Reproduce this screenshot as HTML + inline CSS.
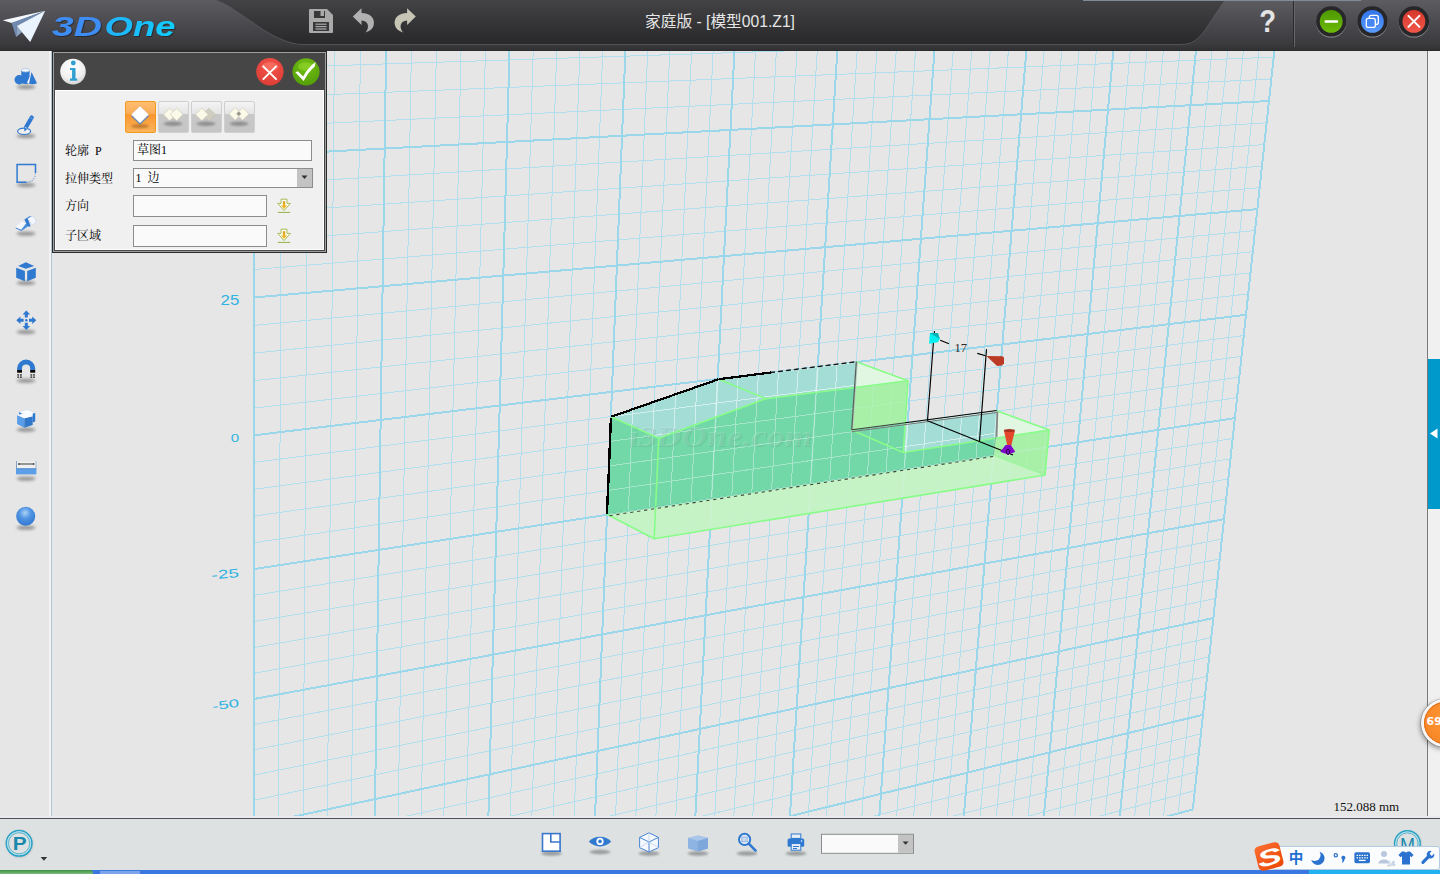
<!DOCTYPE html>
<html lang="zh-CN">
<head>
<meta charset="utf-8">
<title>家庭版 - [模型001.Z1]</title>
<style>
html,body{margin:0;padding:0;}
html{width:1440px;height:874px;overflow:hidden;background:#e6e6e6;}
body{width:1440px;height:874px;position:relative;overflow:hidden;background:#e6e6e6;font-family:"Liberation Sans","Noto Sans CJK SC",sans-serif;}
.abs{position:absolute;}
#tb{left:0;top:0;width:1440px;height:51px;background:linear-gradient(#5d5c61 0%,#4d4c51 40%,#3b3b3e 85%,#303032 100%);}
#title{left:0;width:1440px;top:11px;height:22px;line-height:22px;text-align:center;color:#e6e6e6;font-size:15.7px;white-space:pre;}
#left{left:0;top:51px;width:51px;height:767px;background:linear-gradient(90deg,#e6e6e6 0,#e6e6e6 49px,#efefef 49px,#f4f4f4 50px,#f4f4f4 51px);border-right:1px solid #adc5d3;}
#view{left:52px;top:51px;width:1375px;height:766px;background:#e6e6e6;overflow:hidden;}
#rstrip{left:1427px;top:51px;width:13px;height:767px;background:#f0f0f0;border-left:1px solid #7a7a7a;box-sizing:border-box;}
#rtab{left:1428px;top:359px;width:12px;height:150px;background:#0099cc;}
#bot{left:0;top:818px;width:1440px;height:52px;background:#dde1e1;border-top:1px solid #505050;box-sizing:border-box;}
#task{left:0;top:870px;width:1440px;height:4px;background:#3b77e0;}
#panel{left:52px;top:51px;width:275px;height:202px;background:#2b2b2b;}
#pbody{left:3px;top:39px;width:269px;height:160px;background:#f0f0f0;border:1px solid #fff;box-sizing:border-box;}
.lbl{position:absolute;left:65px;font-family:"Liberation Serif","Noto Serif CJK SC",serif;font-size:12px;line-height:14px;color:#000;white-space:pre;}
.inp{position:absolute;box-sizing:border-box;border:1px solid #8c8c8c;background:#fafafa;font-family:"Liberation Serif","Noto Serif CJK SC",serif;font-size:12px;line-height:18px;color:#000;white-space:pre;padding-left:3px;}
.tbtn{position:absolute;top:101px;width:31px;height:32px;box-sizing:border-box;border:1px solid #cfcfcf;border-radius:2px;background:linear-gradient(#f4f4f4 0%,#e4e4e4 40%,#c8c8c8 41%,#c6c6c6 100%);}
.tbtn.sel{border-color:#f39a1f;background:linear-gradient(#fdbe70 0%,#fbab56 40%,#f8962f 41%,#fcb45c 100%);}
</style>
</head>
<body>
<div id="tb" class="abs">
<svg class="abs" style="left:0;top:0" width="1440" height="51" viewBox="0 0 1440 51">
<defs>
<linearGradient id="gc" x1="0" y1="0" x2="0" y2="1"><stop offset="0" stop-color="#434346"/><stop offset="1" stop-color="#28282a"/></linearGradient>
<linearGradient id="glogo" x1="0" y1="0" x2="1" y2="0"><stop offset="0" stop-color="#3f86f3"/><stop offset="0.5" stop-color="#2aa6fb"/><stop offset="1" stop-color="#12ccff"/></linearGradient>
<linearGradient id="ggreen" x1="0" y1="0" x2="0" y2="1"><stop offset="0" stop-color="#4d9802"/><stop offset="1" stop-color="#6dba08"/></linearGradient>
<linearGradient id="gblue" x1="0" y1="0" x2="0" y2="1"><stop offset="0" stop-color="#3275ea"/><stop offset="1" stop-color="#5a9bff"/></linearGradient>
<linearGradient id="gred" x1="0" y1="0" x2="0" y2="1"><stop offset="0" stop-color="#d6372c"/><stop offset="1" stop-color="#f2574a"/></linearGradient>
<linearGradient id="glogo2" x1="0" y1="0" x2="1" y2="0"><stop offset="0" stop-color="#2f9ef9"/><stop offset="1" stop-color="#10ceff"/></linearGradient>
</defs>
<path d="M215.5 0 Q223 3 229.7 6.9 L265 30.9 Q280 40 292 43 Q297 44.5 304 44.5 L1180 44.5 Q1186 44.5 1190.5 43 Q1198 40 1204.4 30.9 L1225 0 Z" fill="url(#gc)"/>
<path d="M215.5 0 Q223 3 229.7 6.9 L265 30.9 Q280 40 292 43 Q297 44.5 304 44.5 L1180 44.5 Q1186 44.5 1190.5 43 Q1198 40 1204.4 30.9 L1225 0" fill="none" stroke="#5e5e62" stroke-width="1" opacity="0.75"/>
<rect x="0" y="50" width="1440" height="1" fill="#2c2c2e"/>
<rect x="1083" y="0" width="278" height="1" fill="#7f8b97"/>
<!-- paper plane logo -->
<polygon points="2.7,20.2 45.2,10.8 11.7,23" fill="#f4f9ff"/>
<polygon points="11.7,23 45.2,10.8 16.8,26.1 16.1,37.1" fill="#6f8bb2"/>
<polygon points="16.8,26.1 22,32 16.1,37.1" fill="#8ea6c6"/>
<polygon points="16.8,26.1 45.2,10.8 30.2,41.9" fill="#e9f4ff"/>
<g font-family="'Liberation Sans',sans-serif" font-weight="bold" font-style="italic" font-size="28.5">
<text x="52" y="35.8" style="filter:drop-shadow(1.5px 1.5px 0 rgba(29,29,31,0.6))"><tspan x="52" textLength="50" lengthAdjust="spacingAndGlyphs" fill="#3d8df5">3D</tspan><tspan x="104.5" textLength="71" lengthAdjust="spacingAndGlyphs" fill="url(#glogo2)">One</tspan></text>
</g>
<!-- save -->
<g transform="translate(309,9)" fill="#a9a9a9">
<path d="M1 0 H18 L24 6 V23 a1 1 0 0 1 -1 1 H1 a1 1 0 0 1 -1 -1 V1 a1 1 0 0 1 1 -1 Z"/>
<rect x="5" y="2" width="11" height="7" fill="#38383b"/>
<rect x="11.5" y="2" width="3.5" height="5" fill="#a9a9a9"/>
<rect x="4" y="13" width="16" height="9" fill="#38383b"/>
<rect x="6.5" y="14.6" width="11" height="1.2"/><rect x="6.5" y="17" width="11" height="1.2"/><rect x="6.5" y="19.4" width="11" height="1.2"/>
</g>
<!-- undo -->
<path d="M352.8 16.5 L361.5 8.3 L361.5 13 C370 13 375.5 18 373.6 25.5 C372.8 28.6 370 31.2 365.3 32.6 C369.3 28.5 369.5 21.2 361.5 20.5 L361.5 25 Z" fill="#b1b1b1"/>
<!-- redo -->
<path d="M415.8 16.5 L407.1 8.3 L407.1 13 C398.6 13 393.1 18 395 25.5 C395.8 28.6 398.6 31.2 403.3 32.6 C399.3 28.5 399.1 21.2 407.1 20.5 L407.1 25 Z" fill="#c6c4b4"/>
<!-- help -->
<text x="0" y="0" transform="translate(1267.6,32) scale(0.86,1)" text-anchor="middle" font-family="'Liberation Sans',sans-serif" font-weight="bold" font-size="32" fill="#e4e4e4">?</text>
<rect x="1293" y="1" width="1" height="46" fill="#2a2a2c"/>
<rect x="1294" y="1" width="1" height="46" fill="#68686b"/>
<!-- window buttons -->
<g>
<circle cx="1331.2" cy="22.4" r="15.2" fill="#8a8a8d"/><circle cx="1331.2" cy="21.4" r="15.2" fill="#272729"/><circle cx="1331.2" cy="21.4" r="11.4" fill="url(#ggreen)"/>
<rect x="1324.5" y="20.2" width="13.6" height="2.6" rx="1" fill="#fff"/>
<circle cx="1372.4" cy="22.4" r="15.2" fill="#8a8a8d"/><circle cx="1372.4" cy="21.4" r="15.2" fill="#272729"/><circle cx="1372.4" cy="21.4" r="11.4" fill="url(#gblue)"/>
<rect x="1369.3" y="15.4" width="9" height="9" rx="2" fill="none" stroke="#fff" stroke-width="1.3"/>
<rect x="1366.3" y="18.4" width="9" height="9" rx="2" fill="#4586f2" stroke="#fff" stroke-width="1.3"/>
<circle cx="1413.9" cy="22.4" r="15.2" fill="#8a8a8d"/><circle cx="1413.9" cy="21.4" r="15.2" fill="#272729"/><circle cx="1413.9" cy="21.4" r="11.4" fill="url(#gred)"/>
<path d="M1408.4 15.9 L1419.4 26.9 M1419.4 15.9 L1408.4 26.9" stroke="#fff" stroke-width="2" stroke-linecap="round"/>
</g>
</svg>
<div id="title" class="abs">家庭版 - [模型001.Z1]</div>
</div>
<div id="left" class="abs">
<svg class="abs" style="left:0;top:0" width="51" height="767" viewBox="0 51 51 767">
<defs>
<filter id="blur1" x="-50%" y="-300%" width="200%" height="700%"><feGaussianBlur stdDeviation="1.5"/></filter>
<radialGradient id="gsph" cx="0.47" cy="0.32" r="0.7"><stop offset="0" stop-color="#a9d2f6"/><stop offset="0.45" stop-color="#4f93e2"/><stop offset="1" stop-color="#3177cf"/></radialGradient>
</defs>
<g fill="#000" opacity="0.34" filter="url(#blur1)">
<ellipse cx="26" cy="87" rx="9.6" ry="2.2"/><ellipse cx="26" cy="136" rx="9.6" ry="2.2"/><ellipse cx="26" cy="185" rx="9.6" ry="2.2"/><ellipse cx="26" cy="233.6" rx="9.6" ry="2.2"/><ellipse cx="26" cy="283" rx="9.6" ry="2.2"/><ellipse cx="26" cy="332" rx="9.6" ry="2.2"/><ellipse cx="26" cy="380.8" rx="9.6" ry="2.2"/><ellipse cx="26" cy="429.8" rx="9.6" ry="2.2"/><ellipse cx="26" cy="478.6" rx="9.6" ry="2.2"/><ellipse cx="26" cy="527.6" rx="9.6" ry="2.2"/>
</g>
<!-- 1 basic shapes -->
<g fill="#2f79d1">
<circle cx="19.2" cy="79.8" r="4.7"/>
<path d="M21.3 70.4 V83 Q25.4 85 29.6 83 V70.4 Z"/>
<ellipse cx="25.5" cy="70.3" rx="4.1" ry="1.7" fill="#fbfdff" stroke="#9fc0e8" stroke-width="0.8"/>
<path d="M31.5 71.9 L37 83.2 Q33 85 29 83.6 Z"/>
<path d="M30.4 75.6 L29 83.4 L27 82.6 Z" fill="#fff"/>
</g>
<!-- 2 sketch -->
<g>
<ellipse cx="24.1" cy="131.3" rx="6.5" ry="3.2" fill="#efefef" stroke="#2f79d1" stroke-width="1.2"/>
<path d="M31.8 117.4 L26.3 126.6" stroke="#2f79d1" stroke-width="4" stroke-linecap="round" fill="none"/>
<path d="M24.3 126.2 L28.1 128.4 L24.3 131.6 Z" fill="#2f79d1"/>
<path d="M25 127.2 L27.4 128.6" stroke="#cfe0f5" stroke-width="0.8"/>
<path d="M29.6 117.4 L32.8 119.2" stroke="#7faee6" stroke-width="0.7"/>
</g>
<!-- 3 special -->
<g fill="none">
<path d="M35.5 173 V164.6 H17.1 V182.3 H26.5" stroke="#2f79d1" stroke-width="1.5"/>
<path d="M35.4 173.4 C35.2 178.6 31.8 182 26.8 182.4" stroke="#8eaad0" stroke-width="1.3" stroke-dasharray="1.2 1.2"/>
</g>
<!-- 4 feature -->
<g>
<path d="M15.8 227.2 L21.6 221.5 L25.8 223.6 L21.2 229.4 Z" fill="#f3f7fd"/>
<path d="M15.8 227.2 L21.2 229.4 L25.8 223.6 L27.8 224.6 L27.8 226.6 L21.4 231 L15.8 228.6 Z" fill="#4b8fe0"/>
<path d="M15.8 227.2 L21.6 221.5 L25.8 223.6 L21.2 229.4 Z" fill="#f3f7fd"/>
<path d="M24.4 219.6 L29.4 216.2 L32 216.4 L28 219 L30.6 226.6 L27.8 226.6 Z" fill="#2f79d1"/>
<path d="M27.6 218.8 Q31 216.2 32.6 216.6 Q36 219 36.4 222 L32 225.4 Q30.6 221.4 27.6 218.8 Z" fill="#f3f7fd" stroke="#b8cde8" stroke-width="0.5"/>
</g>
<!-- 5 cube -->
<g fill="#2f79d1">
<path d="M25.9 262.2 L34.2 265.9 L25.9 268.8 L18.1 265.9 Z"/>
<path d="M16.2 267.8 L24.9 270.9 L24.9 281.2 L16.2 277.7 Z"/>
<path d="M27.2 270.9 L35.8 267.8 L35.8 277.7 L27.2 281.2 Z"/>
</g>
<!-- 6 move -->
<g fill="#2f79d1">
<path d="M26.3 310.6 L30.2 314.6 H27.8 V317.6 H24.8 V314.6 H22.6 Z"/>
<path d="M26.3 330 L30.2 326 H27.8 V322.8 H24.8 V326 H22.6 Z"/>
<path d="M16.3 320.2 L20.4 316.4 V318.8 H23.6 V321.7 H20.4 V324 Z"/>
<path d="M36.3 320.2 L32.2 316.4 V318.8 H29 V321.7 H32.2 V324 Z"/>
<circle cx="26.3" cy="320.2" r="1.25"/>
</g>
<!-- 7 magnet -->
<g>
<path d="M17.1 370.2 V368.6 a9.05 9.05 0 0 1 18.1 0 V370.2 H30.2 V368.6 a4.1 4.1 0 0 0 -8.2 0 V370.2 Z" fill="#2f79d1"/>
<rect x="17.1" y="370" width="4.9" height="2.7" fill="#050505"/><rect x="30.2" y="370" width="5" height="2.7" fill="#050505"/>
<g fill="#3a3a3a"><rect x="17.3" y="374.2" width="1.8" height="1.5"/><rect x="20" y="374.2" width="1.8" height="1.5"/><rect x="17.3" y="376.4" width="1.8" height="1.5"/><rect x="20" y="376.4" width="1.8" height="1.5"/><rect x="30.4" y="374.2" width="1.8" height="1.5"/><rect x="33.1" y="374.2" width="1.8" height="1.5"/><rect x="30.4" y="376.4" width="1.8" height="1.5"/><rect x="33.1" y="376.4" width="1.8" height="1.5"/></g>
</g>
<!-- 8 group -->
<g>
<path d="M19.1 412.1 L27.4 409.6 L35.2 412.9 L32.7 416.2 L24 414 Z" fill="#fafcff" stroke="#c2d4ec" stroke-width="0.4"/>
<path d="M19.1 412.1 L19.1 415 L22 414 Z" fill="#2f79d1"/>
<path d="M32.7 413.6 L35.2 412.9 V421.6 L32.7 422.6 Z" fill="#2f79d1"/>
<path d="M17.1 415 L24.3 418.3 V427.8 L17.1 423.9 Z" fill="#5a9ee8"/>
<path d="M24.3 418.3 L32.7 416.2 V424.9 L24.3 427.8 Z" fill="#3278ca"/>
<path d="M17.1 415 L25.7 413.4 L32.7 416.2 L24.3 418.3 Z" fill="#fafcff"/>
</g>
<!-- 9 measure -->
<g>
<rect x="16.6" y="461.6" width="19.4" height="7" fill="#f0f0f0"/>
<rect x="16" y="468.7" width="20.4" height="5.7" fill="#5c9fe8"/>
<rect x="16" y="468.3" width="20.4" height="0.9" fill="#4a86cc"/>
<rect x="16" y="461.1" width="1" height="7.2" fill="#7f9cc4"/><rect x="35.4" y="461.1" width="1.1" height="7.2" fill="#a8bcd6"/>
<path d="M18.6 464 H34" stroke="#5a5a5a" stroke-width="1.2"/>
<circle cx="19" cy="464" r="0.9" fill="#4a4a4a"/><circle cx="33.6" cy="464" r="0.9" fill="#4a4a4a"/>
</g>
<!-- 10 sphere -->
<circle cx="25.7" cy="516.3" r="9.5" fill="url(#gsph)"/>
</svg>
</div>
<div id="view" class="abs">
<svg class="abs" style="left:0;top:0" width="1375" height="766" viewBox="52 51 1375 766">
<defs>
<clipPath id="cmodel"><path d="M606.7 514.2 L611.3 416.7 L718.7 379.2 L856.3 361.7 L908 380.8 L905 423.3 L996.7 410.8 L1049.2 430 L1045 475 L654.2 538.7 Z"/></clipPath>
<clipPath id="csk"><path d="M606.7 514.2 L611.3 416.7 L718.7 379.2 L856.3 361.7 L851.7 430 L996.7 410.8 L993.3 455 Z"/></clipPath>
<clipPath id="ctop"><path d="M611.3 416.7 L718.7 379.2 L856.3 361.7 L855.8 387.5 L765.8 398.7 L658.7 438.3 Z M905 423.3 L996.7 410.8 L994.5 438.5 L903.3 452.5 Z"/></clipPath>
</defs>
<g shape-rendering="crispEdges" fill="none">
<path d="M277.7 1060.7L282.8 -296.1M253.5 1043.7L1194.8 790.6M301.6 1054.1L310.4 -294.5M253.6 1020.0L1196.8 771.8M325.2 1047.6L337.6 -293.0M253.6 996.1L1198.9 752.8M348.6 1041.2L364.5 -291.5M253.6 972.1L1200.9 733.8M394.4 1028.6L417.3 -288.5M253.6 923.7L1205.0 695.6M417.0 1022.4L443.1 -287.1M253.7 899.3L1207.1 676.3M439.3 1016.3L468.6 -285.7M253.7 874.8L1209.2 656.9M461.4 1010.2L493.8 -284.2M253.7 850.1L1211.3 637.5M504.7 998.3L543.2 -281.5M253.8 800.3L1215.5 598.4M526.1 992.5L567.5 -280.1M253.8 775.2L1217.6 578.7M547.2 986.7L591.4 -278.8M253.8 749.9L1219.7 559.0M568.0 980.9L615.0 -277.4M253.8 724.6L1221.9 539.1M609.1 969.7L661.4 -274.8M253.9 673.3L1226.2 499.1M629.3 964.1L684.2 -273.6M253.9 647.5L1228.3 479.0M649.3 958.6L706.7 -272.3M253.9 621.5L1230.5 458.8M669.1 953.2L728.9 -271.1M253.9 595.4L1232.7 438.5M708.0 942.5L772.6 -268.6M254.0 542.7L1237.1 397.6M727.1 937.3L794.0 -267.4M254.0 516.1L1239.3 377.1M746.1 932.1L815.2 -266.2M254.0 489.3L1241.5 356.4M764.9 926.9L836.1 -265.0M254.1 462.4L1243.7 335.6M801.8 916.8L877.2 -262.7M254.1 408.1L1248.2 293.9M820.0 911.8L897.5 -261.6M254.1 380.7L1250.5 272.8M838.0 906.8L917.4 -260.5M254.2 353.1L1252.8 251.7M855.9 901.9L937.2 -259.4M254.2 325.4L1255.1 230.5M891.0 892.3L976.0 -257.2M254.2 269.5L1259.7 187.7M908.3 887.5L995.1 -256.1M254.3 241.2L1262.0 166.2M925.4 882.8L1014.0 -255.1M254.3 212.9L1264.3 144.6M942.4 878.2L1032.7 -254.0M254.3 184.3L1266.6 122.8M975.8 869.0L1069.4 -252.0M254.4 126.6L1271.3 79.1M992.3 864.5L1087.5 -250.9M254.4 97.5L1273.7 57.1M1008.6 860.0L1105.3 -249.9M254.4 68.2L1276.1 35.0M1024.7 855.5L1123.0 -248.9M254.4 38.8L1278.5 12.7M1056.6 846.8L1157.8 -247.0M254.5 -20.7L1283.3 -32.0M1072.3 842.5L1174.9 -246.0M254.5 -50.7L1285.7 -54.5M1087.9 838.2L1191.8 -245.1M254.6 -80.9L1288.2 -77.2M1103.3 834.0L1208.6 -244.1M254.6 -111.3L1290.6 -99.9M1133.7 825.6L1241.6 -242.3M254.6 -172.6L1295.5 -145.8M1148.6 821.5L1257.8 -241.4M254.7 -203.6L1298.0 -168.8M1163.5 817.4L1273.9 -240.5M254.7 -234.7L1300.5 -192.0M1178.2 813.4L1289.8 -239.6M254.7 -266.1L1303.0 -215.3" stroke="#b1dfee" stroke-width="1"/>
<path d="M253.5 1067.3L254.7 -297.7M253.5 1067.3L1192.8 809.4M371.6 1034.9L391.1 -290.0M253.6 948.0L1203.0 714.7M483.2 1004.3L518.7 -282.9M253.7 825.3L1213.4 618.0M588.7 975.3L638.4 -276.1M253.8 699.0L1224.0 519.2M688.6 947.8L750.9 -269.8M254.0 569.1L1234.9 418.1M783.4 921.8L856.8 -263.9M254.1 435.3L1246.0 314.8M873.5 897.1L956.7 -258.3M254.2 297.5L1257.4 209.1M959.2 873.5L1051.1 -253.0M254.3 155.5L1269.0 101.0M1040.7 851.1L1140.5 -248.0M254.5 9.2L1280.9 -9.6M1118.5 829.8L1225.2 -243.2M254.6 -141.8L1293.1 -122.8M1192.8 809.4L1305.5 -238.7M254.7 -297.7L1305.5 -238.7" stroke="#9ad7ea" stroke-width="2"/>
</g>
<!-- axis labels -->
<g font-family="'Liberation Sans',sans-serif" fill="#2fb3e2">
<text transform="translate(220.6,305)" font-size="13.9" textLength="18.8" lengthAdjust="spacingAndGlyphs">25</text>
<text transform="translate(230.8,442)" font-size="11.2" textLength="8.4" lengthAdjust="spacingAndGlyphs">0</text>
<text transform="translate(211.8,579.4) rotate(-5)" font-size="12.2" textLength="27.6" lengthAdjust="spacingAndGlyphs">-25</text>
<text transform="translate(212.8,710.4) rotate(-8)" font-size="11.4" textLength="27" lengthAdjust="spacingAndGlyphs">-50</text>
</g>
<!-- model -->
<g>
<polygon points="606.7,514.2 654.2,538.7 1045,475 993.3,455" fill="#c5f3c5"/>
<polygon points="996.7,410.8 1049.2,430 1045,475 993.3,455" fill="#a8f0a8"/>
<polygon points="856.3,361.7 908,380.8 903.3,452.5 851.7,430" fill="#a8f0a8"/>
<polygon points="856.3,361.7 908,380.8 855.8,387.5" fill="#e2f7e2"/>
<polygon points="996.7,410.8 1049.2,430 995.6,438.3" fill="#e2f7e2"/>
<polygon points="606.7,515 611.3,416.7 718.7,379.2 856.3,361.7 851.7,430 996.7,410.8 993.3,455.8" fill="#72d8a8"/>
<polygon points="611.3,416.7 718.7,379.2 765.8,398.7 658.7,438.3" fill="#a3ddd6"/>
<polygon points="718.7,379.2 856.3,361.7 855.8,387.5 765.8,398.7" fill="#a3ddd6"/>
<polygon points="905,423.3 996.7,410.8 995.6,438.3 903.3,452.5" fill="#a3ddd6"/>
<!-- grid overlay on the model -->
<g clip-path="url(#cmodel)" fill="none" stroke="#d8f4ff" shape-rendering="crispEdges">
<path d="M277.7 1060.7L282.8 -296.1M253.5 1043.7L1194.8 790.6M301.6 1054.1L310.4 -294.5M253.6 1020.0L1196.8 771.8M325.2 1047.6L337.6 -293.0M253.6 996.1L1198.9 752.8M348.6 1041.2L364.5 -291.5M253.6 972.1L1200.9 733.8M394.4 1028.6L417.3 -288.5M253.6 923.7L1205.0 695.6M417.0 1022.4L443.1 -287.1M253.7 899.3L1207.1 676.3M439.3 1016.3L468.6 -285.7M253.7 874.8L1209.2 656.9M461.4 1010.2L493.8 -284.2M253.7 850.1L1211.3 637.5M504.7 998.3L543.2 -281.5M253.8 800.3L1215.5 598.4M526.1 992.5L567.5 -280.1M253.8 775.2L1217.6 578.7M547.2 986.7L591.4 -278.8M253.8 749.9L1219.7 559.0M568.0 980.9L615.0 -277.4M253.8 724.6L1221.9 539.1M609.1 969.7L661.4 -274.8M253.9 673.3L1226.2 499.1M629.3 964.1L684.2 -273.6M253.9 647.5L1228.3 479.0M649.3 958.6L706.7 -272.3M253.9 621.5L1230.5 458.8M669.1 953.2L728.9 -271.1M253.9 595.4L1232.7 438.5M708.0 942.5L772.6 -268.6M254.0 542.7L1237.1 397.6M727.1 937.3L794.0 -267.4M254.0 516.1L1239.3 377.1M746.1 932.1L815.2 -266.2M254.0 489.3L1241.5 356.4M764.9 926.9L836.1 -265.0M254.1 462.4L1243.7 335.6M801.8 916.8L877.2 -262.7M254.1 408.1L1248.2 293.9M820.0 911.8L897.5 -261.6M254.1 380.7L1250.5 272.8M838.0 906.8L917.4 -260.5M254.2 353.1L1252.8 251.7M855.9 901.9L937.2 -259.4M254.2 325.4L1255.1 230.5M891.0 892.3L976.0 -257.2M254.2 269.5L1259.7 187.7M908.3 887.5L995.1 -256.1M254.3 241.2L1262.0 166.2M925.4 882.8L1014.0 -255.1M254.3 212.9L1264.3 144.6M942.4 878.2L1032.7 -254.0M254.3 184.3L1266.6 122.8M975.8 869.0L1069.4 -252.0M254.4 126.6L1271.3 79.1M992.3 864.5L1087.5 -250.9M254.4 97.5L1273.7 57.1M1008.6 860.0L1105.3 -249.9M254.4 68.2L1276.1 35.0M1024.7 855.5L1123.0 -248.9M254.4 38.8L1278.5 12.7M1056.6 846.8L1157.8 -247.0M254.5 -20.7L1283.3 -32.0M1072.3 842.5L1174.9 -246.0M254.5 -50.7L1285.7 -54.5M1087.9 838.2L1191.8 -245.1M254.6 -80.9L1288.2 -77.2M1103.3 834.0L1208.6 -244.1M254.6 -111.3L1290.6 -99.9M1133.7 825.6L1241.6 -242.3M254.6 -172.6L1295.5 -145.8M1148.6 821.5L1257.8 -241.4M254.7 -203.6L1298.0 -168.8M1163.5 817.4L1273.9 -240.5M254.7 -234.7L1300.5 -192.0M1178.2 813.4L1289.8 -239.6M254.7 -266.1L1303.0 -215.3" stroke-width="1" opacity="0.13"/>
<path d="M253.5 1067.3L254.7 -297.7M253.5 1067.3L1192.8 809.4M371.6 1034.9L391.1 -290.0M253.6 948.0L1203.0 714.7M483.2 1004.3L518.7 -282.9M253.7 825.3L1213.4 618.0M588.7 975.3L638.4 -276.1M253.8 699.0L1224.0 519.2M688.6 947.8L750.9 -269.8M254.0 569.1L1234.9 418.1M783.4 921.8L856.8 -263.9M254.1 435.3L1246.0 314.8M873.5 897.1L956.7 -258.3M254.2 297.5L1257.4 209.1M959.2 873.5L1051.1 -253.0M254.3 155.5L1269.0 101.0M1040.7 851.1L1140.5 -248.0M254.5 9.2L1280.9 -9.6M1118.5 829.8L1225.2 -243.2M254.6 -141.8L1293.1 -122.8M1192.8 809.4L1305.5 -238.7M254.7 -297.7L1305.5 -238.7" stroke-width="2" opacity="0.16"/>
</g>
<g clip-path="url(#csk)" fill="none" stroke="#ffffff" shape-rendering="crispEdges">
<path d="M277.7 1060.7L282.8 -296.1M253.5 1043.7L1194.8 790.6M301.6 1054.1L310.4 -294.5M253.6 1020.0L1196.8 771.8M325.2 1047.6L337.6 -293.0M253.6 996.1L1198.9 752.8M348.6 1041.2L364.5 -291.5M253.6 972.1L1200.9 733.8M394.4 1028.6L417.3 -288.5M253.6 923.7L1205.0 695.6M417.0 1022.4L443.1 -287.1M253.7 899.3L1207.1 676.3M439.3 1016.3L468.6 -285.7M253.7 874.8L1209.2 656.9M461.4 1010.2L493.8 -284.2M253.7 850.1L1211.3 637.5M504.7 998.3L543.2 -281.5M253.8 800.3L1215.5 598.4M526.1 992.5L567.5 -280.1M253.8 775.2L1217.6 578.7M547.2 986.7L591.4 -278.8M253.8 749.9L1219.7 559.0M568.0 980.9L615.0 -277.4M253.8 724.6L1221.9 539.1M609.1 969.7L661.4 -274.8M253.9 673.3L1226.2 499.1M629.3 964.1L684.2 -273.6M253.9 647.5L1228.3 479.0M649.3 958.6L706.7 -272.3M253.9 621.5L1230.5 458.8M669.1 953.2L728.9 -271.1M253.9 595.4L1232.7 438.5M708.0 942.5L772.6 -268.6M254.0 542.7L1237.1 397.6M727.1 937.3L794.0 -267.4M254.0 516.1L1239.3 377.1M746.1 932.1L815.2 -266.2M254.0 489.3L1241.5 356.4M764.9 926.9L836.1 -265.0M254.1 462.4L1243.7 335.6M801.8 916.8L877.2 -262.7M254.1 408.1L1248.2 293.9M820.0 911.8L897.5 -261.6M254.1 380.7L1250.5 272.8M838.0 906.8L917.4 -260.5M254.2 353.1L1252.8 251.7M855.9 901.9L937.2 -259.4M254.2 325.4L1255.1 230.5M891.0 892.3L976.0 -257.2M254.2 269.5L1259.7 187.7M908.3 887.5L995.1 -256.1M254.3 241.2L1262.0 166.2M925.4 882.8L1014.0 -255.1M254.3 212.9L1264.3 144.6M942.4 878.2L1032.7 -254.0M254.3 184.3L1266.6 122.8M975.8 869.0L1069.4 -252.0M254.4 126.6L1271.3 79.1M992.3 864.5L1087.5 -250.9M254.4 97.5L1273.7 57.1M1008.6 860.0L1105.3 -249.9M254.4 68.2L1276.1 35.0M1024.7 855.5L1123.0 -248.9M254.4 38.8L1278.5 12.7M1056.6 846.8L1157.8 -247.0M254.5 -20.7L1283.3 -32.0M1072.3 842.5L1174.9 -246.0M254.5 -50.7L1285.7 -54.5M1087.9 838.2L1191.8 -245.1M254.6 -80.9L1288.2 -77.2M1103.3 834.0L1208.6 -244.1M254.6 -111.3L1290.6 -99.9M1133.7 825.6L1241.6 -242.3M254.6 -172.6L1295.5 -145.8M1148.6 821.5L1257.8 -241.4M254.7 -203.6L1298.0 -168.8M1163.5 817.4L1273.9 -240.5M254.7 -234.7L1300.5 -192.0M1178.2 813.4L1289.8 -239.6M254.7 -266.1L1303.0 -215.3" stroke-width="1" opacity="0.3"/>
<path d="M253.5 1067.3L254.7 -297.7M253.5 1067.3L1192.8 809.4M371.6 1034.9L391.1 -290.0M253.6 948.0L1203.0 714.7M483.2 1004.3L518.7 -282.9M253.7 825.3L1213.4 618.0M588.7 975.3L638.4 -276.1M253.8 699.0L1224.0 519.2M688.6 947.8L750.9 -269.8M254.0 569.1L1234.9 418.1M783.4 921.8L856.8 -263.9M254.1 435.3L1246.0 314.8M873.5 897.1L956.7 -258.3M254.2 297.5L1257.4 209.1M959.2 873.5L1051.1 -253.0M254.3 155.5L1269.0 101.0M1040.7 851.1L1140.5 -248.0M254.5 9.2L1280.9 -9.6M1118.5 829.8L1225.2 -243.2M254.6 -141.8L1293.1 -122.8M1192.8 809.4L1305.5 -238.7M254.7 -297.7L1305.5 -238.7" stroke-width="1" opacity="0.38"/>
</g>
<g clip-path="url(#ctop)" fill="none" stroke="#f4fbff" shape-rendering="crispEdges">
<path d="M277.7 1060.7L282.8 -296.1M253.5 1043.7L1194.8 790.6M301.6 1054.1L310.4 -294.5M253.6 1020.0L1196.8 771.8M325.2 1047.6L337.6 -293.0M253.6 996.1L1198.9 752.8M348.6 1041.2L364.5 -291.5M253.6 972.1L1200.9 733.8M394.4 1028.6L417.3 -288.5M253.6 923.7L1205.0 695.6M417.0 1022.4L443.1 -287.1M253.7 899.3L1207.1 676.3M439.3 1016.3L468.6 -285.7M253.7 874.8L1209.2 656.9M461.4 1010.2L493.8 -284.2M253.7 850.1L1211.3 637.5M504.7 998.3L543.2 -281.5M253.8 800.3L1215.5 598.4M526.1 992.5L567.5 -280.1M253.8 775.2L1217.6 578.7M547.2 986.7L591.4 -278.8M253.8 749.9L1219.7 559.0M568.0 980.9L615.0 -277.4M253.8 724.6L1221.9 539.1M609.1 969.7L661.4 -274.8M253.9 673.3L1226.2 499.1M629.3 964.1L684.2 -273.6M253.9 647.5L1228.3 479.0M649.3 958.6L706.7 -272.3M253.9 621.5L1230.5 458.8M669.1 953.2L728.9 -271.1M253.9 595.4L1232.7 438.5M708.0 942.5L772.6 -268.6M254.0 542.7L1237.1 397.6M727.1 937.3L794.0 -267.4M254.0 516.1L1239.3 377.1M746.1 932.1L815.2 -266.2M254.0 489.3L1241.5 356.4M764.9 926.9L836.1 -265.0M254.1 462.4L1243.7 335.6M801.8 916.8L877.2 -262.7M254.1 408.1L1248.2 293.9M820.0 911.8L897.5 -261.6M254.1 380.7L1250.5 272.8M838.0 906.8L917.4 -260.5M254.2 353.1L1252.8 251.7M855.9 901.9L937.2 -259.4M254.2 325.4L1255.1 230.5M891.0 892.3L976.0 -257.2M254.2 269.5L1259.7 187.7M908.3 887.5L995.1 -256.1M254.3 241.2L1262.0 166.2M925.4 882.8L1014.0 -255.1M254.3 212.9L1264.3 144.6M942.4 878.2L1032.7 -254.0M254.3 184.3L1266.6 122.8M975.8 869.0L1069.4 -252.0M254.4 126.6L1271.3 79.1M992.3 864.5L1087.5 -250.9M254.4 97.5L1273.7 57.1M1008.6 860.0L1105.3 -249.9M254.4 68.2L1276.1 35.0M1024.7 855.5L1123.0 -248.9M254.4 38.8L1278.5 12.7M1056.6 846.8L1157.8 -247.0M254.5 -20.7L1283.3 -32.0M1072.3 842.5L1174.9 -246.0M254.5 -50.7L1285.7 -54.5M1087.9 838.2L1191.8 -245.1M254.6 -80.9L1288.2 -77.2M1103.3 834.0L1208.6 -244.1M254.6 -111.3L1290.6 -99.9M1133.7 825.6L1241.6 -242.3M254.6 -172.6L1295.5 -145.8M1148.6 821.5L1257.8 -241.4M254.7 -203.6L1298.0 -168.8M1163.5 817.4L1273.9 -240.5M254.7 -234.7L1300.5 -192.0M1178.2 813.4L1289.8 -239.6M254.7 -266.1L1303.0 -215.3" stroke-width="1" opacity="0.3"/>
<path d="M253.5 1067.3L254.7 -297.7M253.5 1067.3L1192.8 809.4M371.6 1034.9L391.1 -290.0M253.6 948.0L1203.0 714.7M483.2 1004.3L518.7 -282.9M253.7 825.3L1213.4 618.0M588.7 975.3L638.4 -276.1M253.8 699.0L1224.0 519.2M688.6 947.8L750.9 -269.8M254.0 569.1L1234.9 418.1M783.4 921.8L856.8 -263.9M254.1 435.3L1246.0 314.8M873.5 897.1L956.7 -258.3M254.2 297.5L1257.4 209.1M959.2 873.5L1051.1 -253.0M254.3 155.5L1269.0 101.0M1040.7 851.1L1140.5 -248.0M254.5 9.2L1280.9 -9.6M1118.5 829.8L1225.2 -243.2M254.6 -141.8L1293.1 -122.8M1192.8 809.4L1305.5 -238.7M254.7 -297.7L1305.5 -238.7" stroke-width="2" opacity="0.3"/>
</g>
<!-- watermark -->
<text x="628.3" y="446.3" font-family="'Liberation Serif',serif" font-style="italic" font-weight="bold" font-size="29.5" textLength="184" lengthAdjust="spacingAndGlyphs" fill="#ffffff" fill-opacity="0.13" style="filter:drop-shadow(1px 1px 0 rgba(31,74,58,0.8))">i3DOne.com</text>
<!-- extrusion edges -->
<g fill="none" stroke="#88fc88" stroke-width="1.6" stroke-linejoin="round">
<path d="M654.2 538.7 L658.7 438.3 L765.8 398.7 L908 380.8 L903.3 452.5 L1049.2 430 L1045 475 Z"/>
<path d="M611.3 416.7 L658.7 438.3 M718.7 379.2 L765.8 398.7 M856.3 361.7 L908 380.8 M851.7 430 L903.3 452.5 M996.7 410.8 L1049.2 430 M606.7 514.2 L654.2 538.7"/>
<path d="M993.3 455 L1045 475" opacity="0.5"/>
</g>
<!-- sketch lines -->
<g fill="none" stroke-linecap="butt">
<path d="M857.3 361.7 L852.7 430" stroke="#b9c9c0" stroke-width="1"/><path d="M856.3 361.7 L851.7 430" stroke="#59635b" stroke-width="1.3"/>
<path d="M995.6 437 L993.3 455" stroke="#5fae92" stroke-width="1" opacity="0.8"/><path d="M997.4 411.6 L996.5 437" stroke="#858585" stroke-width="1.8"/>
<path d="M851.7 431.7 L996.7 412.5" stroke="#777" stroke-width="1"/>
<path d="M851.7 429.8 L905 422.8" stroke="#3a3f3a" stroke-width="1"/><path d="M905 422.8 L996.7 410.5" stroke="#000" stroke-width="1.1"/>
<path d="M608 514 L993.3 455" stroke="#4fb9a0" stroke-width="1" stroke-dasharray="3.2 3.8" stroke-dashoffset="2" opacity="0.55"/><path d="M609.5 515.7 L993.3 456.4" stroke="#3f4b35" stroke-width="1.1" stroke-dasharray="3.2 3.8"/>
<path d="M770 372.6 L856.3 361.7" stroke="#151515" stroke-width="1.4" stroke-dasharray="5 3"/>
<g shape-rendering="crispEdges"><path d="M718.7 379.2 L771 372.5" stroke="#000" stroke-width="2.2"/>
<path d="M611.3 416.7 L718.7 379.2" stroke="#000" stroke-width="2.2"/>
<path d="M606.9 514.2 L608.8 472 L610.9 418" stroke="#000" stroke-width="2.4"/></g>
</g>
<!-- dimension & handles -->
<g fill="none" stroke="#000" stroke-width="1.15">
<path d="M927.5 420.8 L933.3 344 L934.5 331"/>
<path d="M979.5 441 L986.5 349.1"/>
<path d="M927.5 420.8 L1013 455"/>
<path d="M940.2 340.3 L949 343.7"/>
<path d="M977.3 353.4 L985.6 355.7"/>
</g>
<polygon points="929.9,333 937.9,333 939.8,339.1 937.9,342.2 929.1,343.7" fill="#06eef0"/>
<polygon points="929.9,333 937.9,333 939.8,339.1" fill="#08b2b6"/>
<text x="954.6" y="351.7" font-family="'Liberation Serif',serif" font-size="12.5" fill="#2a2a2a">17</text>
<polygon points="986.4,355.9 1002.9,356.2 1004,357.8 1004,363.2 1002.1,365.5 997.1,365.9" fill="#bb3a24"/>
<path d="M1003.9 430.6 L1014.9 430.8 L1011.2 446 L1007.4 446 Z" fill="#e5472d"/>
<ellipse cx="1009.4" cy="430.6" rx="5.5" ry="1.5" fill="#a8321f"/>
<path d="M1005.6 445 L1010.8 445 L1015.2 451.7 Q1012.5 453.6 1008 454 Q1003.5 453.6 1000.3 451.7 Z" fill="#8008c8"/>
<ellipse cx="1008" cy="452" rx="1.6" ry="2.8" fill="none" stroke="#24003e" stroke-width="0.9"/>
<path d="M1006.2 454.6 Q1008 457 1009.8 454.6" fill="none" stroke="#dfeadf" stroke-width="0.9"/>
</g>
</svg>
</div>
<div id="panel" class="abs"><div class="abs" style="left:1px;top:1px;right:1px;bottom:1px;background:#a0a0a0"></div><div class="abs" style="left:2px;top:2px;right:2px;bottom:2px;background:#464646"></div>
<div id="pbody" class="abs"></div>
</div>
<div class="tbtn sel" style="left:124.5px"></div><div class="tbtn" style="left:157.5px"></div><div class="tbtn" style="left:190.5px"></div><div class="tbtn" style="left:223.5px"></div>
<svg class="abs" style="left:53px;top:52px" width="274" height="201" viewBox="53 52 274 201">
<defs>
<radialGradient id="ginfo" cx="0.45" cy="0.3" r="0.8"><stop offset="0" stop-color="#ffffff"/><stop offset="0.6" stop-color="#f0f0f0"/><stop offset="1" stop-color="#c8c8c8"/></radialGradient>
<radialGradient id="gpr" cx="0.5" cy="0.3" r="0.8"><stop offset="0" stop-color="#f4544a"/><stop offset="1" stop-color="#d93a32"/></radialGradient>
<radialGradient id="gpg" cx="0.5" cy="0.3" r="0.8"><stop offset="0" stop-color="#74c016"/><stop offset="1" stop-color="#4f9a05"/></radialGradient>
<linearGradient id="garr" x1="0" y1="0" x2="0" y2="1"><stop offset="0" stop-color="#d89c10"/><stop offset="1" stop-color="#fbc440"/></linearGradient>
</defs>
<circle cx="73" cy="71.6" r="12.8" fill="url(#ginfo)"/>
<circle cx="73.3" cy="63" r="2.4" fill="#2f9ed0"/>
<path d="M70 68 H75.5 V78.6 H77.2 V80.7 H70 V78.6 H72.1 V70 H70 Z" fill="#2f9ed0"/>
<circle cx="269.9" cy="71.8" r="13.7" fill="url(#gpr)"/>
<ellipse cx="270" cy="66.6" rx="8.6" ry="4.4" fill="#ff8a7a" opacity="0.45"/>
<path d="M262.8 65.9 L276.6 79.6 M276.6 65.9 L262.8 79.6" stroke="#fff" stroke-width="1.9" stroke-linecap="butt"/>
<circle cx="306" cy="71.8" r="13.6" fill="url(#gpg)"/>
<ellipse cx="305.6" cy="66.4" rx="7.6" ry="4.2" fill="#a6e63a" opacity="0.4"/>
<path d="M295.3 72.3 L298 71.3 L303.1 76.4 C306.5 70.6 310.9 65.2 315.5 62.1 L314.8 66.5 C309.9 70.6 306.5 75.9 303.6 81 Z" fill="#fff"/>
<defs><filter id="blur3" x="-50%" y="-300%" width="200%" height="700%"><feGaussianBlur stdDeviation="1.1"/></filter></defs>
<ellipse cx="140" cy="126.2" rx="9" ry="2" fill="#8a4a08" opacity="0.5" filter="url(#blur3)"/>
<g fill="#000" opacity="0.28" filter="url(#blur3)"><ellipse cx="173" cy="123.8" rx="9.5" ry="2.2"/><ellipse cx="206" cy="123.8" rx="9.5" ry="2.2"/><ellipse cx="239" cy="123.8" rx="9.5" ry="2.2"/></g>
<path d="M140 107.6 L148.9 116.2 L140 124.8 L131.1 116.2 Z" fill="#4a7fc0"/>
<path d="M140 106 L148.9 114.6 L140 123.2 L131.1 114.6 Z" fill="#fff" stroke="#c9b49a" stroke-width="0.5"/>
<g stroke="#bdbaa6" stroke-width="0.5">
<path d="M169.6 108.2 L176 114.5 L169.6 120.8 L163.2 114.5 Z" fill="#fbfae8"/><path d="M176.6 108.2 L183 114.5 L176.6 120.8 L170.2 114.5 Z" fill="#fbfae8"/>
<path d="M208.8 108.2 L215.4 114.5 L208.8 120.8 L202.4 114.5 Z" fill="#cfcec0"/><path d="M201.8 108.2 L208.2 114.5 L201.8 120.8 L195.4 114.5 Z" fill="#fbfae8"/>
<path d="M235.2 107.6 L241.6 113.9 L235.2 120.2 L228.8 113.9 Z" fill="#fbfae8"/><path d="M242.6 107.6 L249 113.9 L242.6 120.2 L236.2 113.9 Z" fill="#fbfae8"/>
</g>
<path d="M238.9 111.6 L241.2 113.8 L238.9 116 L236.6 113.8 Z" fill="#97968a"/>
<!-- down arrows -->
<g>
<path d="M281.1 199.2 H287 V203.4 H290.4 L284.1 210.6 L277.8 203.4 H281.1 Z" fill="#fbfbf0" stroke="#a2b548" stroke-width="0.9" stroke-linejoin="round"/>
<path d="M282.9 201.2 H285.2 V205.6 H287.2 L284.1 209 L281 205.6 H282.9 Z" fill="url(#garr)"/>
<rect x="277.9" y="211.9" width="12.2" height="1.1" fill="#a0b850"/>
</g>
<g transform="translate(0,30)">
<path d="M281.1 199.2 H287 V203.4 H290.4 L284.1 210.6 L277.8 203.4 H281.1 Z" fill="#fbfbf0" stroke="#a2b548" stroke-width="0.9" stroke-linejoin="round"/>
<path d="M282.9 201.2 H285.2 V205.6 H287.2 L284.1 209 L281 205.6 H282.9 Z" fill="url(#garr)"/>
<rect x="277.9" y="211.9" width="12.2" height="1.1" fill="#a0b850"/>
</g>
</svg>
<div class="lbl" style="top:144px;word-spacing:3px">轮廓 P</div>
<div class="lbl" style="top:171.5px">拉伸类型</div>
<div class="lbl" style="top:199px">方向</div>
<div class="lbl" style="top:229px">子区域</div>
<div class="inp" style="left:133px;top:140px;width:179px;height:21px;line-height:19px">草图1</div>
<div class="inp" style="left:132.5px;top:168px;width:180.5px;height:20px;line-height:18px;padding-left:2px;word-spacing:3px">1 边</div>
<div class="abs" style="left:297px;top:169px;width:15px;height:18px;background:#c3c3c3"></div>
<svg class="abs" style="left:297px;top:169px" width="15" height="18"><path d="M4.5 6.5 H10.5 L7.5 10 Z" fill="#333"/></svg>
<div class="inp" style="left:133px;top:195px;width:134px;height:22px"></div>
<div class="inp" style="left:133px;top:225px;width:134px;height:22px"></div>
<div id="rstrip" class="abs"></div>
<div id="rtab" class="abs"><svg width="12" height="150"><path d="M2 74.5 L9.5 69.5 V79.5 Z" fill="#fff"/></svg></div>
<div class="abs" style="left:0;top:816px;width:1440px;height:2px;background:#e9ebf0"></div>
<div id="bot" class="abs"></div>
<div id="task" class="abs"><div class="abs" style="left:0;top:0;width:93px;height:4px;background:linear-gradient(#3f8f45,#79bd7a);border-radius:0 3px 0 0"></div><div class="abs" style="left:100px;top:1px;width:40px;height:3px;background:#7ba4ea"></div><div class="abs" style="left:1309px;top:0;width:131px;height:4px;background:#1fb2ee"></div></div>
<svg class="abs" style="left:0;top:818px" width="1440" height="52" viewBox="0 818 1440 52">
<defs>
<filter id="blur2" x="-50%" y="-200%" width="200%" height="500%"><feGaussianBlur stdDeviation="1.3"/></filter>
</defs>
<g fill="#000" opacity="0.3" filter="url(#blur2)">
<ellipse cx="551.5" cy="853.5" rx="10.5" ry="2.2"/><ellipse cx="600" cy="852" rx="10.5" ry="2.2"/><ellipse cx="649" cy="853.5" rx="10.5" ry="2.2"/><ellipse cx="698" cy="853.5" rx="10.5" ry="2.2"/><ellipse cx="747" cy="853.5" rx="10.5" ry="2.2"/><ellipse cx="796" cy="853.5" rx="10.5" ry="2.2"/>
</g>
<!-- P button -->
<g>
<circle cx="19.6" cy="844" r="13.2" fill="#000" opacity="0.18" filter="url(#blur2)"/>
<circle cx="19.1" cy="843.3" r="12.8" fill="#dde1e1" stroke="#26a2c6" stroke-width="1.5"/>
<circle cx="19.1" cy="843.3" r="11.5" fill="none" stroke="#9fe0f0" stroke-width="0.9"/>
<circle cx="19.1" cy="843.3" r="10.6" fill="none" stroke="#2a9dbd" stroke-width="0.7"/>
<text transform="translate(19.6,850) scale(1.12,1)" text-anchor="middle" font-family="'Liberation Sans',sans-serif" font-weight="bold" font-size="18.5" fill="#1a8aac">P</text>
<path d="M40.6 857 H47.2 L43.9 860.8 Z" fill="#333"/>
</g>
<!-- M button -->
<g>
<circle cx="1407.9" cy="844.2" r="13.2" fill="#000" opacity="0.18" filter="url(#blur2)"/>
<circle cx="1407.4" cy="843.5" r="12.8" fill="#dde1e1" stroke="#26a2c6" stroke-width="1.5"/>
<circle cx="1407.4" cy="843.5" r="11.5" fill="none" stroke="#9fe0f0" stroke-width="0.9"/>
<circle cx="1407.4" cy="843.5" r="10.6" fill="none" stroke="#2a9dbd" stroke-width="0.7"/>
<text x="1407.4" y="850.5" text-anchor="middle" font-family="'Liberation Sans',sans-serif" font-size="18" fill="#1a8aac">M</text>
</g>
<!-- view layout -->
<rect x="542.5" y="833.6" width="17.6" height="17.6" fill="#fff" stroke="#3a76cc" stroke-width="1.6"/>
<path d="M550.8 833.6 V842 H560" fill="none" stroke="#3a76cc" stroke-width="1.6"/>
<!-- eye -->
<path d="M588.8 841.6 C594 835.2 606 835.2 611.2 841.6 C606 848 594 848 588.8 841.6 Z" fill="#2f79d1"/>
<circle cx="600" cy="841.4" r="3.6" fill="#fff"/><circle cx="600" cy="841.4" r="1.8" fill="#2f79d1"/>
<!-- wire cube -->
<g fill="#f4f8fd" stroke="#4a86d4" stroke-width="1">
<path d="M649 832.8 L658.4 837.4 V847.6 L649 852 L639.6 847.6 V837.4 Z"/>
<path d="M639.6 837.4 L649 842 L658.4 837.4 M649 842 V852" fill="none"/>
<path d="M649 832.8 V842 M639.6 847.6 L649 842 L658.4 847.6" fill="none" stroke="#b5cdec" stroke-width="0.7"/>
</g>
<!-- solid cube -->
<path d="M698 835.4 L708 838 V848.4 L698 851.6 L688 848.4 V838 Z" fill="#8db3e2"/>
<path d="M688 838 L698 835.4 L708 838 L698 841 Z" fill="#a9c6ea"/>
<path d="M698 841 L708 838 V848.4 L698 851.6 Z" fill="#7ea8dc"/>
<!-- magnifier -->
<circle cx="744.6" cy="839.4" r="5.6" fill="#e9f0f8" stroke="#2f79d1" stroke-width="2"/>
<rect x="741.8" y="837" width="5.4" height="4.8" fill="#c6d8ee" stroke="#6f9cd6" stroke-width="0.6"/>
<path d="M749 843.8 L755.6 850.6" stroke="#2f79d1" stroke-width="2.6" stroke-linecap="round"/>
<!-- printer -->
<g fill="#2f79d1">
<rect x="791.2" y="834" width="9.6" height="4.4" fill="#e9f0f8" stroke="#2f79d1" stroke-width="1"/>
<rect x="787.6" y="838.4" width="16.6" height="8.4" rx="1.5"/>
<rect x="791.2" y="843.6" width="9.6" height="6.6" fill="#e9f0f8" stroke="#2f79d1" stroke-width="1"/>
<rect x="793" y="846" width="6" height="1" /><rect x="793" y="848" width="4" height="1"/>
<circle cx="801.6" cy="841" r="0.8" fill="#fff"/>
</g>
<!-- combo -->
<rect x="821.5" y="834.3" width="92" height="19" fill="#fafafa" stroke="#8c8c8c" stroke-width="1"/>
<rect x="898" y="835" width="15" height="17.8" fill="#c3c3c3"/>
<path d="M902.6 841.4 H908.6 L905.6 844.8 Z" fill="#333"/>
</svg>
<!-- IME toolbar -->
<div class="abs" style="left:1272px;top:846px;width:168px;height:24px;box-sizing:border-box;background:#fbfcfe;border:1px solid #b4cbe6;border-radius:3px"></div>
<svg class="abs" style="left:1250px;top:838px" width="190" height="36" viewBox="1250 838 190 36">
<defs><linearGradient id="gsg" x1="0" y1="0" x2="0.6" y2="1"><stop offset="0" stop-color="#fa6e30"/><stop offset="1" stop-color="#ec4c0c"/></linearGradient></defs>
<g transform="rotate(-14 1269 856.4)">
<rect x="1256.2" y="844" width="25.6" height="25" rx="4.5" fill="url(#gsg)"/>
<text transform="translate(1269.2,865) scale(1.62,1)" text-anchor="middle" font-family="'Liberation Sans',sans-serif" font-weight="bold" font-style="italic" font-size="22.5" fill="#fff">S</text>
</g>
<text x="1296" y="862.8" text-anchor="middle" font-family="'Liberation Sans','Noto Sans CJK SC',sans-serif" font-weight="bold" font-size="14.6" fill="#1e6fd0">中</text>
<circle cx="1317.8" cy="858.2" r="6.7" fill="#2b73cf"/><circle cx="1314.6" cy="855" r="6" fill="#fbfcfe"/>
<circle cx="1335.8" cy="855.2" r="1.6" fill="none" stroke="#2b73cf" stroke-width="1.3"/>
<path d="M1341.4 858 a2 2 0 1 1 3 1.4 c0 1.8 -1.2 3 -2.8 3.6 c1 -1.2 1.4 -2.2 -0.2 -5 Z" fill="#2b73cf"/>
<rect x="1354.4" y="852.2" width="15.6" height="11" rx="1.6" fill="#2b73cf"/>
<path d="M1356.6 855.4 H1368 M1356.6 857.8 H1368" stroke="#fff" stroke-width="1.3" stroke-dasharray="1.5 1"/><path d="M1358.8 860.4 H1365.6" stroke="#fff" stroke-width="1.3"/>
<circle cx="1384" cy="854" r="3" fill="#b9c6dc"/><path d="M1378.4 863.6 C1378.4 858 1389.6 858 1389.6 863.6 Z" fill="#b9c6dc"/>
<text x="1391" y="865.6" text-anchor="middle" font-family="'Liberation Sans',sans-serif" font-weight="bold" font-size="7" fill="#fff" stroke="#b9c6dc" stroke-width="0.5">14</text>
<path d="M1402 851.4 L1404.4 851.4 C1405 852.6 1407 852.6 1407.6 851.4 L1410 851.4 L1413.6 855 L1411.4 857.2 L1410 856 V864.4 H1402 V856 L1400.6 857.2 L1398.4 855 Z" fill="#2b73cf"/>
<path d="M1431.5 851 a3.8 3.8 0 0 0 -4.6 5 L1421.8 861.2 a1.5 1.5 0 0 0 2.2 2.2 L1429.2 858.2 a3.8 3.8 0 0 0 5 -4.6 L1431.8 856 L1429.6 853.8 Z" fill="#2b73cf"/>
</svg>
<!-- orange badge -->
<div class="abs" style="left:1400px;top:680px;width:40px;height:90px;overflow:hidden">
<div class="abs" style="left:20.5px;top:18.5px;width:48px;height:48px;border-radius:50%;background:#f6f6f6;box-shadow:-1px 2px 5px rgba(0,0,0,0.4),0 0 0 0.6px rgba(120,120,120,0.5)"></div>
<div class="abs" style="left:23.5px;top:21.5px;width:42px;height:42px;border-radius:50%;background:radial-gradient(circle at 50% 40%,#ff9636,#f5811f);box-shadow:inset 0 0 0 1px #e0701a;color:#fff;font-weight:bold;font-size:11px;line-height:42px;font-family:'DejaVu Sans','Liberation Sans',sans-serif;white-space:pre;"><span style="position:absolute;left:3px;top:-1px">69</span></div>
</div>
<div class="abs" style="left:1333.5px;top:799px;font-family:'Liberation Serif',serif;font-size:13px;line-height:15px;color:#111;white-space:pre;">152.088 mm</div>
</body>
</html>
